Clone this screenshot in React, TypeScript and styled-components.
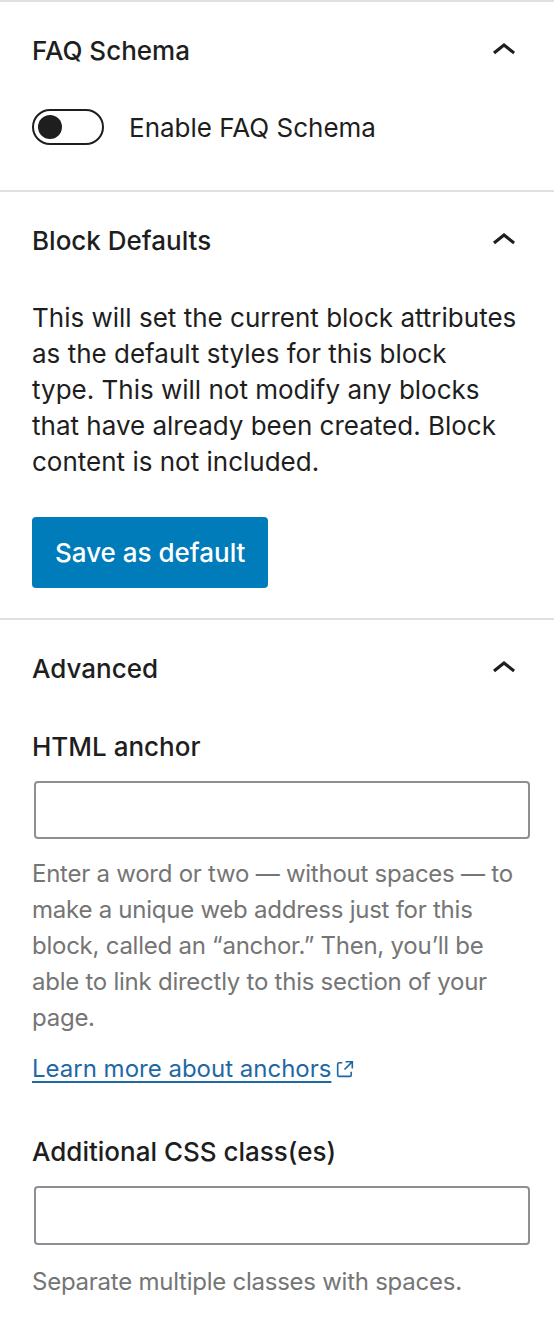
import React from "react";
import styled, { createGlobalStyle } from "styled-components";

const GlobalStyle = createGlobalStyle`
  html, body {
    margin: 0;
    padding: 0;
    background: #ffffff;
  }
  body {
    font-family: Inter, "Noto Sans", "Liberation Sans", sans-serif;
    color: #1e1e1e;
    -webkit-font-smoothing: antialiased;
  }
  * { box-sizing: border-box; }
`;

const Sidebar = styled.div`
  width: 554px;
  display: flex;
  flex-direction: column;
  background: #fff;
`;

const Panel = styled.section`
  border-top: 2px solid #e0e0e0;
  display: flex;
  flex-direction: column;
`;

const PanelHeader = styled.div`
  height: 98px;
  display: flex;
  align-items: center;
  justify-content: space-between;
  padding: 0 26px 0 32px;
`;

const PanelTitle = styled.h2`
  margin: 0;
  font-size: 26px;
  font-weight: 500;
  color: #1e1e1e;
  line-height: 1;
`;

const Chevron = styled.svg`
  width: 48px;
  height: 48px;
  fill: #1e1e1e;
  flex: none;
`;

const PanelBody = styled.div<{ $bottom: number }>`
  display: flex;
  flex-direction: column;
  padding: 0 32px ${(p) => p.$bottom}px 32px;
`;

const ToggleRow = styled.label`
  display: flex;
  align-items: center;
  gap: 25px;
  margin-top: 9px;
  font-size: 26px;
`;

const ToggleTrack = styled.span`
  width: 72px;
  height: 36px;
  border: 2px solid #1e1e1e;
  border-radius: 18px;
  display: flex;
  align-items: center;
  padding-left: 4px;
  flex: none;
`;

const ToggleKnob = styled.span`
  width: 24px;
  height: 24px;
  border-radius: 50%;
  background: #1e1e1e;
`;

const Paragraph = styled.p`
  margin: 10px 0 0;
  font-size: 26px;
  line-height: 36px;
  color: #1e1e1e;
`;

const PrimaryButton = styled.button`
  align-self: flex-start;
  margin-top: 37px;
  height: 71px;
  padding: 0 23px;
  background: #007cba;
  color: #fff;
  border: none;
  border-radius: 4px;
  font-family: inherit;
  font-size: 26px;
  font-weight: 500;
`;

const Field = styled.div<{ $top: number }>`
  display: flex;
  flex-direction: column;
  margin-top: ${(p) => p.$top}px;
`;

const FieldLabel = styled.label`
  font-size: 26px;
  font-weight: 500;
  line-height: 36px;
  color: #1e1e1e;
`;

const TextInput = styled.input<{ $h: number }>`
  margin: 16px 0 0 2px;
  width: 496px;
  height: ${(p) => p.$h}px;
  border: 2px solid #8c8f94;
  border-radius: 4px;
  background: #fff;
  font-size: 24px;
  padding: 0 14px;
`;

const Help = styled.p<{ $top: number }>`
  margin: ${(p) => p.$top}px 0 0;
  font-size: 24px;
  line-height: 36px;
  letter-spacing: -0.25px;
  color: #757575;
`;

const LearnLink = styled.a`
  margin-top: 15px;
  align-self: flex-start;
  display: inline-flex;
  align-items: center;
  font-size: 24px;
  line-height: 36px;
  color: #1f68a6;
  text-decoration: none;
`;

const LinkText = styled.span`
  text-decoration: underline;
  text-underline-offset: 4px;
  text-decoration-thickness: 2px;
`;

const ExternalIcon = styled.svg`
  width: 26px;
  height: 26px;
  fill: #1f68a6;
  margin-left: 1px;
`;

const ChevronUp = () => (
  <Chevron viewBox="0 0 24 24" aria-hidden="true">
    <path d="M6.5 12.4L12 8l5.5 4.4-.9 1.2L12 10l-4.5 3.6-1-1.2z" />
  </Chevron>
);

export default function App() {
  return (
    <>
      <GlobalStyle />
      <Sidebar>
        <Panel>
          <PanelHeader>
            <PanelTitle>FAQ Schema</PanelTitle>
            <ChevronUp />
          </PanelHeader>
          <PanelBody $bottom={45}>
            <ToggleRow>
              <ToggleTrack>
                <ToggleKnob />
              </ToggleTrack>
              Enable FAQ Schema
            </ToggleRow>
          </PanelBody>
        </Panel>
        <Panel>
          <PanelHeader>
            <PanelTitle>Block Defaults</PanelTitle>
            <ChevronUp />
          </PanelHeader>
          <PanelBody $bottom={30}>
            <Paragraph>
              This will set the current block attributes as the default styles
              for this block
              <br />
              type. This will not modify any blocks that have already been
              created. Block content is not included.
            </Paragraph>
            <PrimaryButton>Save as default</PrimaryButton>
          </PanelBody>
        </Panel>
        <Panel>
          <PanelHeader>
            <PanelTitle>Advanced</PanelTitle>
            <ChevronUp />
          </PanelHeader>
          <PanelBody $bottom={40}>
            <Field $top={11}>
              <FieldLabel>HTML anchor</FieldLabel>
              <TextInput type="text" $h={58} />
              <Help $top={17}>
                Enter a word or two — without spaces — to make a unique web
                address just for this block, called an “anchor.” Then, you’ll be
                able to link directly to this section of your page.
              </Help>
              <LearnLink href="#">
                <LinkText>Learn more about anchors</LinkText>
                <ExternalIcon viewBox="0 0 24 24" aria-hidden="true">
                  <path d="M19.5 4.5h-7V6h4.44l-5.97 5.97 1.06 1.06L18 7.06v4.44h1.5v-7Zm-13 1a2 2 0 0 0-2 2v10a2 2 0 0 0 2 2h10a2 2 0 0 0 2-2v-3H17v3a.5.5 0 0 1-.5.5h-10a.5.5 0 0 1-.5-.5v-10a.5.5 0 0 1 .5-.5h3V5.5h-3Z" />
                </ExternalIcon>
              </LearnLink>
            </Field>
            <Field $top={47}>
              <FieldLabel>Additional CSS class(es)</FieldLabel>
              <TextInput type="text" $h={59} />
              <Help $top={19}>Separate multiple classes with spaces.</Help>
            </Field>
          </PanelBody>
        </Panel>
      </Sidebar>
    </>
  );
}
